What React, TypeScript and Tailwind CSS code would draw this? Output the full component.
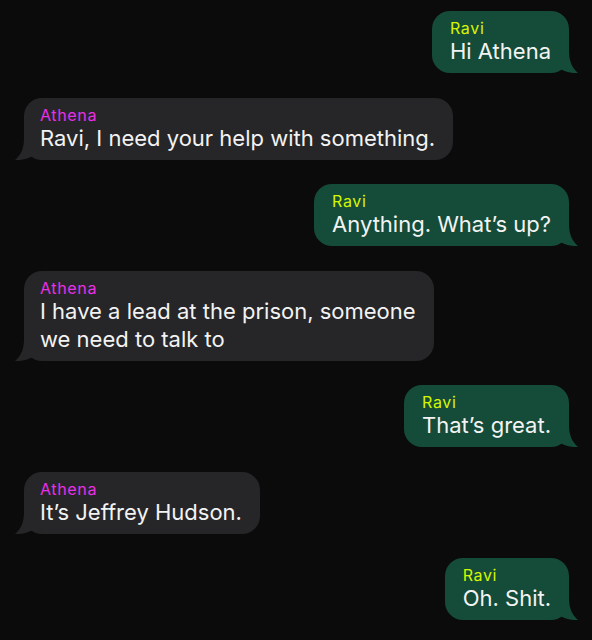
import React from 'react'

type Msg = { from: 'Ravi' | 'Athena'; lines: string[] }

const MESSAGES: Msg[] = [
  { from: 'Ravi', lines: ['Hi Athena'] },
  { from: 'Athena', lines: ['Ravi, I need your help with something.'] },
  { from: 'Ravi', lines: ['Anything. What’s up?'] },
  { from: 'Athena', lines: ['I have a lead at the prison, someone', 'we need to talk to'] },
  { from: 'Ravi', lines: ['That’s great.'] },
  { from: 'Athena', lines: ['It’s Jeffrey Hudson.'] },
  { from: 'Ravi', lines: ['Oh. Shit.'] },
]

// ── Bubble tail ───────────────────────────────────────────────────────────────
function Tail({ side, color }: { side: 'left' | 'right'; color: string }) {
  return (
    <svg
      aria-hidden
      width="18"
      height="22"
      viewBox="0 0 18 22"
      className={side === 'right' ? 'absolute -right-[9px] bottom-0' : 'absolute -left-[9px] bottom-0 -scale-x-100'}
    >
      <path d="M0 0 H9 C9 10 12 17 18 22 C12 22.5 6 21 0 18 Z" fill={color} />
    </svg>
  )
}

function Bubble({ msg }: { msg: Msg }) {
  const mine = msg.from === 'Ravi'
  const bg = mine ? '#144c39' : '#262628'
  return (
    <div className={mine ? 'flex justify-end' : 'flex justify-start'}>
      <div
        className={
          mine
            ? 'relative rounded-[18px] bg-[#144c39] pl-[18px] pr-[18px] pt-[8px] pb-[8px]'
            : 'relative rounded-[18px] bg-[#262628] pl-[16px] pr-[18px] pt-[8px] pb-[8px]'
        }
      >
        <Tail side={mine ? 'right' : 'left'} color={bg} />
        <div
          className={
            mine
              ? 'relative text-[16px] leading-[18px] tracking-[0.04em] text-[#d6f500]'
              : 'relative text-[16px] leading-[18px] tracking-[0.04em] text-[#e92fe6]'
          }
        >
          {msg.from}
        </div>
        <div className="relative text-[22px] leading-[28px] text-[#f3f3f3] whitespace-nowrap">
          {msg.lines.map((l, i) => (
            <div key={i}>{l}</div>
          ))}
        </div>
      </div>
    </div>
  )
}

export default function App() {
  return (
    <div
      className="w-[592px] h-[640px] overflow-hidden bg-[#0b0b0b] pl-6 pr-[23px] pt-[11px] flex flex-col gap-[24.5px]"
      style={{ fontFamily: 'Inter, "Noto Sans", sans-serif' }}
    >
      {MESSAGES.map((m, i) => (
        <Bubble key={i} msg={m} />
      ))}
    </div>
  )
}
